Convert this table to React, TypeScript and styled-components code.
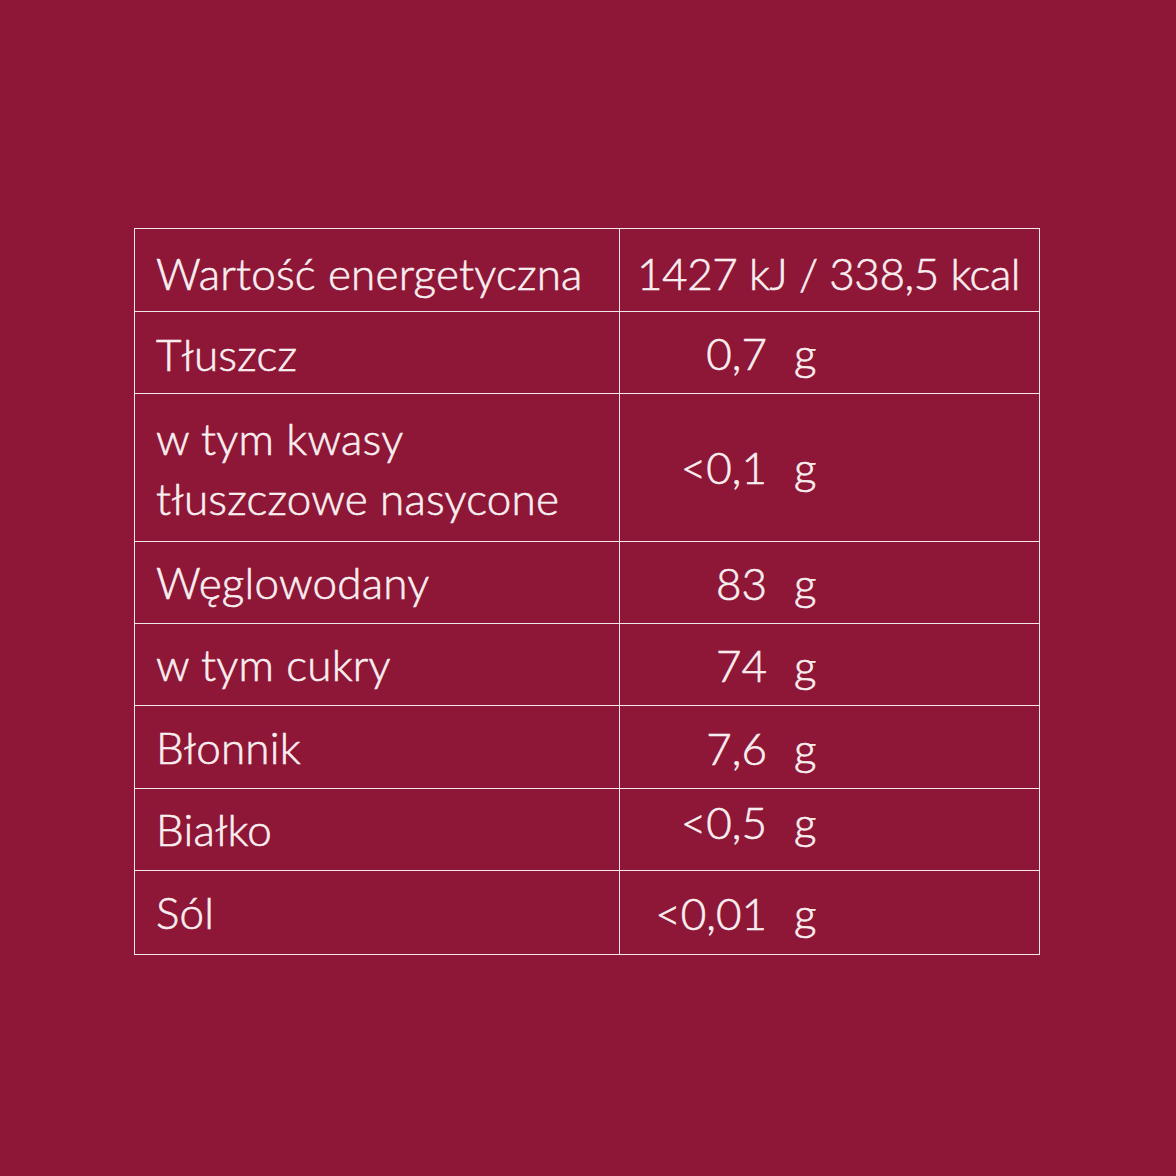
import React from "react";
import styled, { createGlobalStyle } from "styled-components";

const Global = createGlobalStyle`
  html, body { margin: 0; padding: 0; background: #8e1737; }
  body { font-family: "Lato", "Noto Sans", sans-serif; }
`;

const Page = styled.div`
  width: 1176px;
  height: 1176px;
  background: #8e1737;
  display: flex;
  justify-content: flex-start;
  align-items: flex-start;
  padding: 228px 0 0 134px;
  box-sizing: border-box;
`;

const Table = styled.table`
  border-collapse: collapse;
  width: 906px;
  table-layout: fixed;
  color: #f8eef0;
  font-size: 44px;
  font-weight: 300;
  line-height: 1.2;
  -webkit-text-stroke: 0.6px #f8eef0;
`;

const Row = styled.tr<{ $h: number }>`
  height: ${(p) => p.$h}px;
`;

const Cell = styled.td`
  border: 1.5px solid #f3e6ea;
  padding: 0 0 0 21px;
  vertical-align: middle;
  box-sizing: border-box;
`;

const LabelCell = styled(Cell)`
  width: 485px;
`;

const ValueCell = styled(Cell)<{ $shift?: number }>`
  padding-left: 0;
  & > * {
    transform: translateY(${(p) => p.$shift ?? 0}px);
  }
`;

const Energy = styled.div`
  padding-left: 17px;
  white-space: nowrap;
  letter-spacing: -0.4px;
`;

const Amount = styled.div`
  display: flex;
  align-items: baseline;
`;

const Num = styled.span`
  width: 147px;
  text-align: right;
  white-space: nowrap;
`;

const Unit = styled.span`
  margin-left: 27px;
`;

const Label = styled.div<{ $wrap?: boolean; $shift?: number }>`
  line-height: ${(p) => (p.$wrap ? "60px" : "1.2")};
  letter-spacing: 0.2px;
  transform: translateY(${(p) => p.$shift ?? 0}px);
`;

type R = { label: React.ReactNode; num: string; h: number; shift?: number; lshift?: number; wrap?: boolean };

const rows: R[] = [
  { label: "Tłuszcz", num: "0,7", h: 82, lshift: 2, shift: 1 },
  { label: <>w tym kwasy<br />tłuszczowe nasycone</>, num: "<0,1", h: 148, wrap: true },
  { label: "Węglowodany", num: "83", h: 82, shift: 1 },
  { label: "w tym cukry", num: "74", h: 82, shift: 1 },
  { label: "Błonnik", num: "7,6", h: 83, shift: 1 },
  { label: "Białko", num: "<0,5", h: 82, shift: -7 },
  { label: "Sól", num: "<0,01", h: 84, shift: 1 },
];

export default function App() {
  return (
    <>
      <Global />
      <Page>
        <Table>
          <tbody>
            <Row $h={83}>
              <LabelCell>
                <Label $shift={3}>Wartość energetyczna</Label>
              </LabelCell>
              <ValueCell $shift={3}>
                <Energy>1427 kJ / 338,5 kcal</Energy>
              </ValueCell>
            </Row>
            {rows.map((r, i) => (
              <Row key={i} $h={r.h}>
                <LabelCell>
                  <Label $wrap={r.wrap} $shift={r.lshift}>{r.label}</Label>
                </LabelCell>
                <ValueCell $shift={r.shift}>
                  <Amount>
                    <Num>{r.num}</Num>
                    <Unit>g</Unit>
                  </Amount>
                </ValueCell>
              </Row>
            ))}
          </tbody>
        </Table>
      </Page>
    </>
  );
}
